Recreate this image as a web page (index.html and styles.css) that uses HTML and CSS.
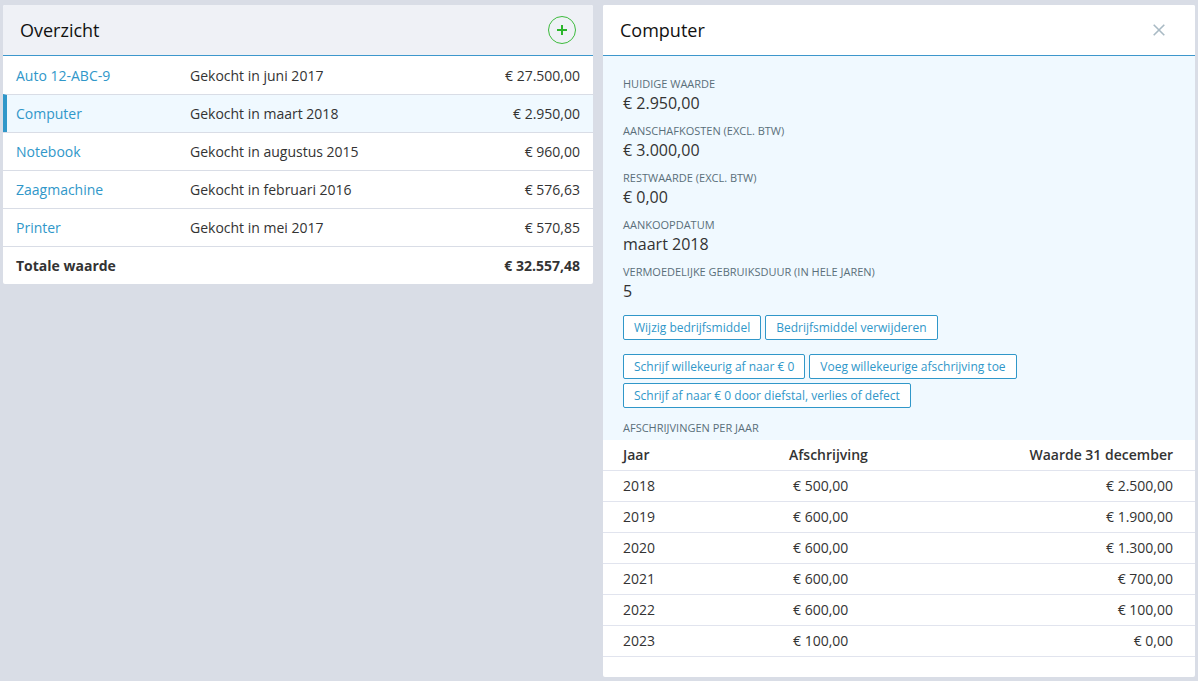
FILE: index.html
```html
<!DOCTYPE html>
<html>
    <head>
        <meta charset="utf-8">
        <title>Overzicht</title>
        <link rel="stylesheet" href="styles.css">
    </head>
    <body>
        <div class="l-wrapper">
            <div class="panel panel-list">
                <div class="panel-head">
                    <h2>Overzicht</h2>
                    <a class="btn-add" href="#">
                        <svg width="30" height="30" viewBox="0 0 30 30">
                            <circle cx="15" cy="15" r="13.5" fill="none" stroke="#3dbb3d" stroke-width="1"/>
                            <path d="M15 10v10M10 15h10" fill="none" stroke="#2cb52c" stroke-width="2"/>
                        </svg>
                    </a>
                </div>
                <div class="row row-first">
                    <a class="row-name" href="#">Auto 12-ABC-9</a>
                    <span class="row-date">Gekocht in juni 2017</span>
                    <span class="row-value">€ 27.500,00</span>
                </div>
                <div class="row row-active">
                    <a class="row-name" href="#">Computer</a>
                    <span class="row-date">Gekocht in maart 2018</span>
                    <span class="row-value">€ 2.950,00</span>
                </div>
                <div class="row">
                    <a class="row-name" href="#">Notebook</a>
                    <span class="row-date">Gekocht in augustus 2015</span>
                    <span class="row-value">€ 960,00</span>
                </div>
                <div class="row">
                    <a class="row-name" href="#">Zaagmachine</a>
                    <span class="row-date">Gekocht in februari 2016</span>
                    <span class="row-value">€ 576,63</span>
                </div>
                <div class="row">
                    <a class="row-name" href="#">Printer</a>
                    <span class="row-date">Gekocht in mei 2017</span>
                    <span class="row-value">€ 570,85</span>
                </div>
                <div class="row row-total">
                    <span class="row-name">Totale waarde</span>
                    <span class="row-date"></span>
                    <span class="row-value">€ 32.557,48</span>
                </div>
            </div>
            <div class="panel panel-detail">
                <div class="panel-head panel-head-white">
                    <h2>Computer</h2>
                    <a class="btn-close" href="#">
                        <svg width="12" height="12" viewBox="0 0 12 12">
                            <path d="M.7.7l10.6 10.6M11.3.7L.7 11.3" fill="none" stroke="#a9bac4" stroke-width="1.6"/>
                        </svg>
                    </a>
                </div>
                <div class="detail">
                    <div class="field">
                        <div class="field-label">Huidige waarde</div>
                        <div class="field-value">€ 2.950,00</div>
                    </div>
                    <div class="field">
                        <div class="field-label">Aanschafkosten (excl. btw)</div>
                        <div class="field-value">€ 3.000,00</div>
                    </div>
                    <div class="field">
                        <div class="field-label">Restwaarde (excl. btw)</div>
                        <div class="field-value">€ 0,00</div>
                    </div>
                    <div class="field">
                        <div class="field-label">Aankoopdatum</div>
                        <div class="field-value">maart 2018</div>
                    </div>
                    <div class="field">
                        <div class="field-label">Vermoedelijke gebruiksduur (in hele jaren)</div>
                        <div class="field-value">5</div>
                    </div>
                    <div class="buttons buttons-first">
                        <a class="btn" href="#">Wijzig bedrijfsmiddel</a>
                        <a class="btn" href="#">Bedrijfsmiddel verwijderen</a>
                    </div>
                    <div class="buttons buttons-second">
                        <a class="btn" href="#">Schrijf willekeurig af naar € 0</a>
                        <a class="btn" href="#">Voeg willekeurige afschrijving toe</a>
                        <a class="btn" href="#">Schrijf af naar € 0 door diefstal, verlies of defect</a>
                    </div>
                    <div class="field-label table-label">Afschrijvingen per jaar</div>
                </div>
                <table class="years">
                    <thead>
                        <tr><th class="col-year">Jaar</th><th class="col-amount">Afschrijving</th><th class="col-rest">Waarde 31 december</th></tr>
                    </thead>
                    <tbody>
                        <tr><td>2018</td><td class="col-amount">€ 500,00</td><td class="col-rest">€ 2.500,00</td></tr>
                        <tr><td>2019</td><td class="col-amount">€ 600,00</td><td class="col-rest">€ 1.900,00</td></tr>
                        <tr><td>2020</td><td class="col-amount">€ 600,00</td><td class="col-rest">€ 1.300,00</td></tr>
                        <tr><td>2021</td><td class="col-amount">€ 600,00</td><td class="col-rest">€ 700,00</td></tr>
                        <tr><td>2022</td><td class="col-amount">€ 600,00</td><td class="col-rest">€ 100,00</td></tr>
                        <tr><td>2023</td><td class="col-amount">€ 100,00</td><td class="col-rest">€ 0,00</td></tr>
                    </tbody>
                </table>
            </div>
        </div>
    </body>
</html>
```

FILE: styles.css
```css
* {
    box-sizing: border-box;
}
html, body {
    height: 100%;
}
body {
    margin: 0;
    font-family: "Open Sans", sans-serif;
    font-size: 14px;
    line-height: 20px;
    color: #333;
    background-color: #d9dde6;
    overflow: hidden;
}
a {
    color: #3097c9;
    text-decoration: none;
}
.l-wrapper {
    display: flex;
    align-items: flex-start;
    gap: 10px;
    padding: 5px 3px;
}
.panel {
    background-color: #fff;
    border-radius: 2px;
}
.panel-list {
    width: 590px;
}
.panel-detail {
    width: 592px;
    height: 672px;
}
.panel-head {
    display: flex;
    align-items: center;
    justify-content: space-between;
    height: 51px;
    padding: 0 17px;
    background-color: #eff1f6;
    border-bottom: 1px solid #3d97cc;
    border-radius: 2px 2px 0 0;
}
.panel-head-white {
    background-color: #fff;
}
.panel-head h2 {
    margin: 0;
    font-size: 18px;
    font-weight: 400;
    color: #111;
}
.btn-add {
    display: flex;
    margin-right: -1px;
}
.btn-close {
    display: flex;
    margin-right: 13px;
}
.row {
    display: flex;
    align-items: center;
    height: 38px;
    padding: 0 13px;
    border-top: 1px solid #d9dde6;
}
.row-first {
    border-top: 0;
    padding-top: 2px;
}
.row-name {
    width: 174px;
}
.row-date {
    flex: 1;
}
.row-active {
    background-color: #f0f9ff;
    border-left: 4px solid #3097c9;
    padding-left: 9px;
}
.row-total {
    font-weight: 700;
}
.detail {
    height: 384px;
    padding: 18px 20px 0;
    background-color: #f0f9ff;
}
.field {
    height: 47px;
}
.field-label {
    font-size: 11px;
    line-height: 20px;
    text-transform: uppercase;
    color: #5a6f7a;
}
.field-value {
    font-size: 16px;
    line-height: 18px;
    color: #333;
}
.buttons {
    display: flex;
    flex-wrap: wrap;
    gap: 4px;
}
.buttons-first {
    margin-top: 6px;
}
.buttons-second {
    margin-top: 14px;
}
.btn {
    display: block;
    height: 25px;
    padding: 0 10px;
    font-size: 12px;
    line-height: 23px;
    background-color: #fff;
    border: 1px solid #3097c9;
    border-radius: 2px;
}
.table-label {
    margin-top: 10px;
}
.years {
    width: 100%;
    border-collapse: collapse;
}
.years th, .years td {
    height: 31px;
    padding: 0 0 0 20px;
    text-align: left;
    border-bottom: 1px solid #e1e4ee;
}
.years th {
    font-weight: 600;
    height: 30px;
}
.col-year {
    width: 186px;
}
.years .col-amount {
    padding-left: 0;
    width: 200px;
}
.years td.col-amount {
    padding-left: 4px;
}
.years .col-rest {
    padding-right: 22px;
    text-align: right;
}
```
